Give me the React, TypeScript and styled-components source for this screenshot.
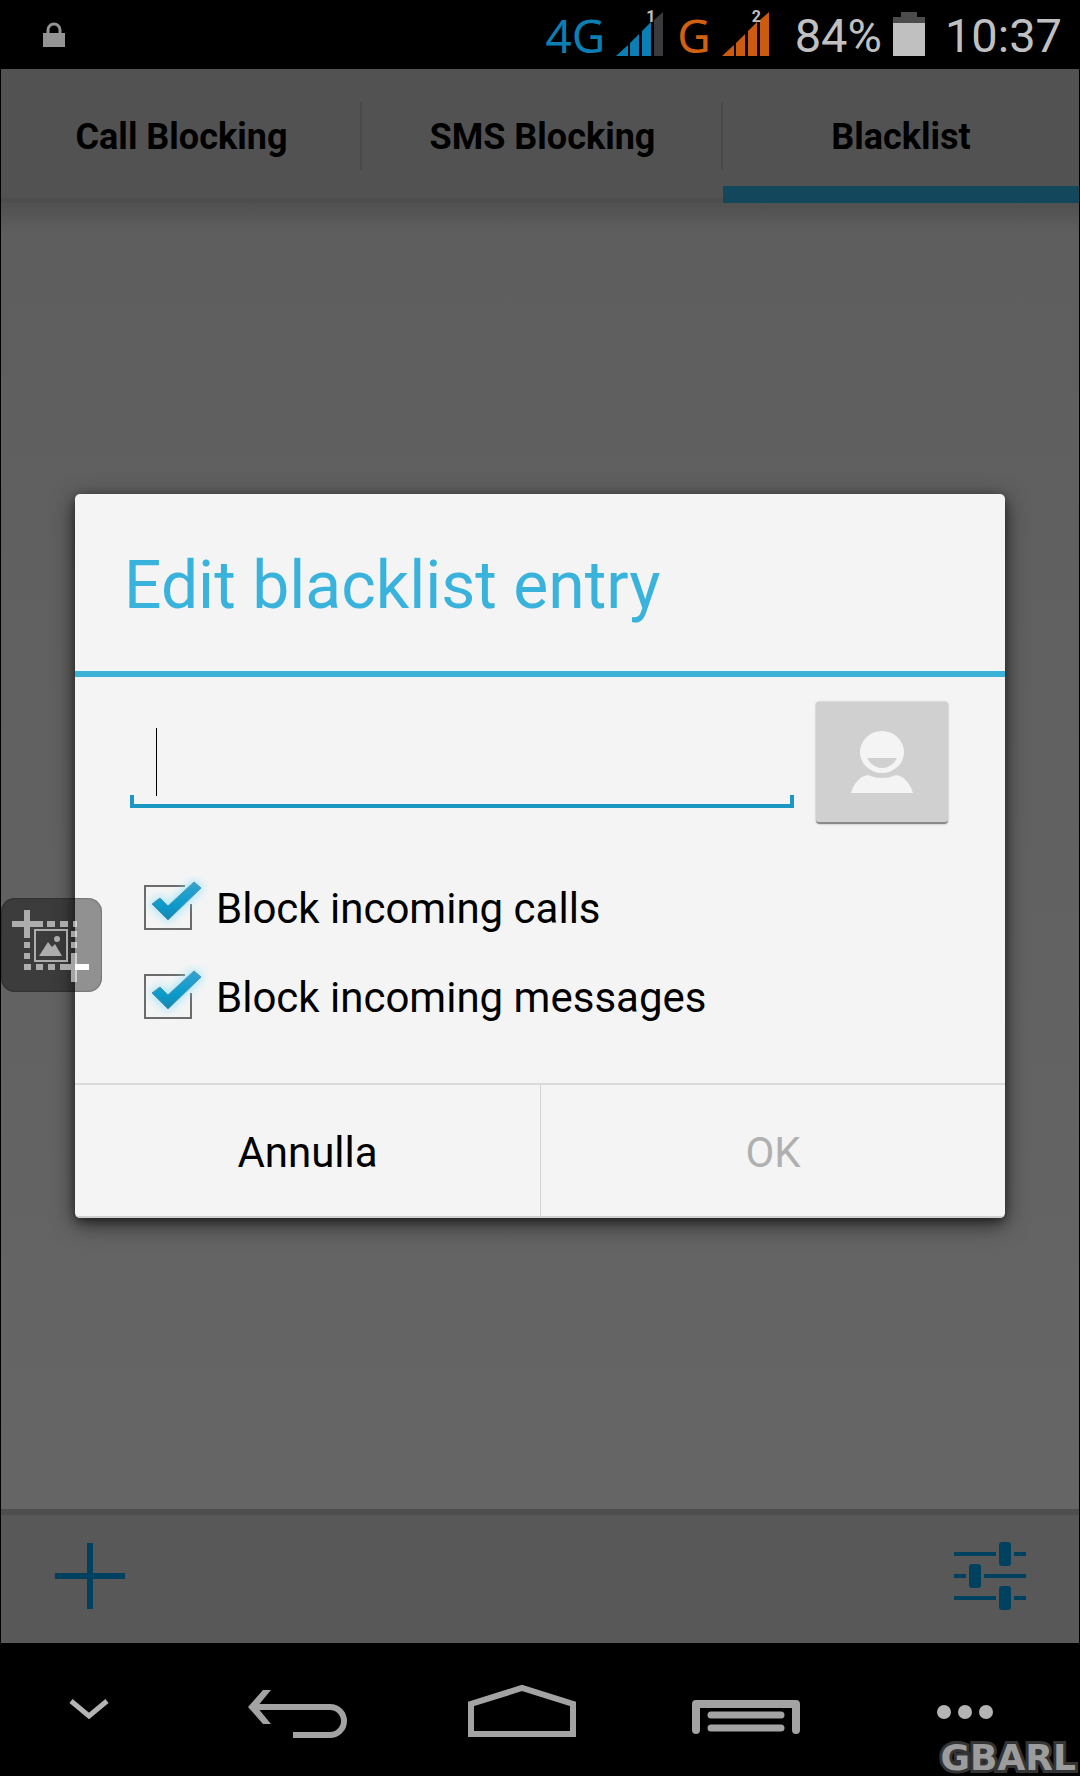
import React, { useState } from "react";
import styled, { createGlobalStyle } from "styled-components";

const GlobalStyle = createGlobalStyle`
  * { box-sizing: border-box; }
  body { margin: 0; background: #000; }
  button, input { font: inherit; color: inherit; margin: 0; padding: 0; border: 0; background: none; border-radius: 0; }
  button { cursor: pointer; }
  svg { display: block; flex: none; }
`;

const Screen = styled.div`
  display: flex;
  flex-direction: column;
  min-height: 100vh;
  background: #000;
  font-family: Roboto, "Liberation Sans", sans-serif;
  color: #000;
  position: relative;
`;

const StatusBar = styled.header`
  display: flex;
  align-items: center;
  justify-content: space-between;
  height: 69px;
  padding: 0 18px 0 43px;
  color: #c0c0c0;
`;

const StatusGroup = styled.div`
  display: flex;
  align-items: center;
  gap: 11px;
`;

const StatusText = styled.span`
  padding-top: 3px;
  font-size: 47px;
  line-height: 52px;
`;

const Clock = styled(StatusText)`
  margin-left: 9px;
`;

const Network = styled.span<{ $color: string }>`
  font-family: "Noto Sans", "Open Sans", sans-serif;
  font-size: 46px;
  line-height: 52px;
  color: ${(p) => p.$color};
`;

const Signal = styled.span<{ $last?: boolean }>`
  display: grid;
  margin-right: ${(p) => (p.$last ? "14px" : "2px")};
  & > * { grid-area: 1 / 1; }
`;

const SimNumber = styled.span`
  padding-left: 30px;
  font-size: 16px;
  font-weight: 700;
  line-height: 10px;
`;

const AppArea = styled.div`
  flex: 1;
  display: flex;
  flex-direction: column;
  margin: 0 1px;
  background: linear-gradient(#5d5d5d, #666);
`;

const Tabs = styled.nav`
  display: grid;
  grid-template-columns: 361fr 361fr 356fr;
  height: 134px;
  background: #525252;
`;

const Tab = styled.button<{ $active?: boolean }>`
  border-bottom: ${(p) => (p.$active ? "17px solid #13475c" : "5px solid #4d4d4d")};
  padding-top: ${(p) => (p.$active ? "19px" : "7px")};
  font-size: 36px;
  font-weight: 700;
  line-height: 40px;
  background: linear-gradient(#494949, #494949) right 0 top ${(p) => (p.$active ? "0 / 0 0" : "33px / 2px 68px")} no-repeat;
`;

const Content = styled.main`
  flex: 1;
  display: grid;
  align-items: center;
  padding: 0 74px;
  background: linear-gradient(rgba(77, 77, 77, 0.8), rgba(77, 77, 77, 0)) top / 100% 28px no-repeat;
`;

const Dialog = styled.form`
  display: flex;
  flex-direction: column;
  border-radius: 5px;
  background: #f4f4f4;
  box-shadow: 0 6px 22px rgba(0, 0, 0, 0.6), 0 3px 8px rgba(0, 0, 0, 0.4);
  overflow: hidden;
`;

const Title = styled.h1`
  margin: 0;
  padding: 52px 49px 0;
  height: 183px;
  border-bottom: 6px solid #3bb3d6;
  color: #3ab3dc;
  font-size: 66px;
  font-weight: 400;
  line-height: 80px;
`;

const Body = styled.div`
  display: flex;
  flex-direction: column;
  padding: 25px 57px 43px 55px;
`;

const EntryRow = styled.div`
  display: flex;
  align-items: flex-start;
  gap: 22px;
  margin-bottom: 38px;
`;

const Field = styled.div`
  position: relative;
  flex: 1;
  display: flex;
  height: 106px;
  border-bottom: 4px solid #1a97c2;
  background:
    linear-gradient(#1a97c2, #1a97c2) left bottom / 4px 9px no-repeat,
    linear-gradient(#1a97c2, #1a97c2) right bottom / 4px 9px no-repeat;
`;

const NumberInput = styled.input`
  flex: 1;
  min-width: 0;
  padding: 0 26px;
  font-size: 42px;
  outline: none;
`;

const Caret = styled.span`
  position: absolute;
  left: 26px;
  top: 26px;
  width: 1px;
  height: 68px;
  background: #000;
`;

const ContactButton = styled.button`
  display: grid;
  place-items: center;
  width: 132px;
  height: 122px;
  border-radius: 4px;
  border-bottom: 2px solid #8a8a8a;
  background: #d0d0d0;
  box-shadow: 0 0 2px #999;
`;

const Option = styled.label`
  display: flex;
  align-items: center;
  gap: 8px;
  height: 89px;
  padding-left: 10px;
  font-size: 42px;
  line-height: 48px;
`;

const OptionText = styled.span`
  padding-top: 4px;
`;

const CheckCell = styled.span`
  display: grid;
  & > * { grid-area: 1 / 1; }
  & > svg { pointer-events: none; }
`;

const CheckInput = styled.input`
  appearance: none;
  width: 68px;
  height: 62px;
`;

const Actions = styled.div`
  display: grid;
  grid-template-columns: 1fr 1fr;
  height: 135px;
  border-top: 2px solid #dadada;
  border-bottom: 2px solid #cfcfcf;
`;

const Action = styled.button`
  padding-top: 4px;
  font-size: 42px;
  line-height: 48px;
  &:disabled { color: #b0b0b0; border-left: 1px solid #d4d4d4; }
`;

const Toolbar = styled.footer`
  display: flex;
  align-items: center;
  justify-content: space-between;
  height: 134px;
  padding: 0 53px 6px;
  border-top: 6px solid #4e4e4e;
  background: #585858;
  color: #004160;
`;

const NavBar = styled.nav`
  display: grid;
  grid-template-columns: 186px 1fr 1fr 1fr 222px;
  height: 133px;
  color: #a3a3a3;
`;

const NavButton = styled.button<{ $edge?: boolean }>`
  display: grid;
  place-items: center;
  padding-right: ${(p) => (p.$edge ? "8px" : "0")};
`;

const CaptureButton = styled.button`
  position: absolute;
  left: 1px;
  top: 898px;
  width: 101px;
  height: 94px;
  border-radius: 14px;
  background: rgba(8, 8, 8, 0.42);
  box-shadow: inset 0 0 2px rgba(0, 0, 0, 0.6);
`;

const Watermark = styled.span`
  position: absolute;
  right: 4px;
  bottom: 0;
  font-family: "DejaVu Sans", sans-serif;
  font-size: 36px;
  font-weight: 700;
  line-height: 36px;
  color: #9c9c9c;
  -webkit-text-stroke: 6px #343434;
  paint-order: stroke fill;
`;

function SignalIcon({ color, last }: { color: string; last: string }) {
  return (
    <svg width="48" height="46" viewBox="0 0 48 46" fill={color}>
      <path d="M0 44 12 33V44ZM14 31 23 22V44H14ZM26 19 35 10V44H26Z" />
      <path d="M38 8 47 0V44H38Z" fill={last} />
    </svg>
  );
}

function CheckIcon({ id, checked }: { id: string; checked: boolean }) {
  return (
    <svg width="68" height="62" viewBox="0 0 68 62">
      <defs>
        <linearGradient id={id} x1="0" y1="0" x2="0" y2="1">
          <stop offset="0" stopColor="#35a3cf" />
          <stop offset="0.6" stopColor="#0a9bcb" />
          <stop offset="1" stopColor="#1687b3" />
        </linearGradient>
        <filter id={`${id}-glow`} x="-40%" y="-40%" width="180%" height="180%">
          <feGaussianBlur stdDeviation="4" />
        </filter>
      </defs>
      {checked ? (
        <>
          <path d="M45 10H5V53H51V28" fill="none" stroke="#6b6b6b" strokeWidth="2" />
          <path d="M12 28 20 22 28 30 54 6 61 12 28 44Z" fill="#8ee4ff" stroke="#8ee4ff" strokeWidth="4" opacity="0.8" filter={`url(#${id}-glow)`} />
          <path d="M12 28 20 22 28 30 54 6 61 12 28 44Z" fill={`url(#${id})`} stroke="#5591ab" strokeWidth="1" />
        </>
      ) : (
        <path d="M5 10H51V53H5Z" fill="none" stroke="#6b6b6b" strokeWidth="2" />
      )}
    </svg>
  );
}

function CheckOption({ id, children }: { id: string; children: React.ReactNode }) {
  const [checked, setChecked] = useState(true);
  return (
    <Option htmlFor={id}>
      <CheckCell>
        <CheckInput id={id} type="checkbox" checked={checked} onChange={(e) => setChecked(e.target.checked)} />
        <CheckIcon id={`${id}-fill`} checked={checked} />
      </CheckCell>
      <OptionText>{children}</OptionText>
    </Option>
  );
}

export default function App() {
  const [entry, setEntry] = useState("");
  return (
    <Screen>
      <GlobalStyle />
      <StatusBar>
        <svg width="22" height="26" viewBox="0 0 22 26">
          <path d="M5 12V8a6 6 0 0 1 12 0v4" fill="none" stroke="#949494" strokeWidth="3" />
          <path d="M0 11H22V25H0Z" fill="#949494" />
        </svg>
        <StatusGroup>
          <Network $color="#0b7fb4">4G</Network>
          <Signal>
            <SignalIcon color="#0b7fb4" last="#3a3a3d" />
            <SimNumber>1</SimNumber>
          </Signal>
          <Network $color="#d3610f">G</Network>
          <Signal $last>
            <SignalIcon color="#cc5a10" last="#cc5a10" />
            <SimNumber>2</SimNumber>
          </Signal>
          <StatusText>84%</StatusText>
          <svg width="32" height="45" viewBox="0 0 32 45">
            <path d="M8 0H24V5H32V12H0V5H8Z" fill="#4c4c4c" />
            <path d="M0 11H32V44H0Z" fill="#c0c0c0" />
          </svg>
          <Clock>10:37</Clock>
        </StatusGroup>
      </StatusBar>

      <AppArea>
        <Tabs>
          <Tab>Call Blocking</Tab>
          <Tab>SMS Blocking</Tab>
          <Tab $active>Blacklist</Tab>
        </Tabs>
        <Content>
          <Dialog onSubmit={(e) => e.preventDefault()}>
            <Title>Edit blacklist entry</Title>
            <Body>
              <EntryRow>
                <Field>
                  <NumberInput aria-label="Number" value={entry} onChange={(e) => setEntry(e.target.value)} />
                  {entry === "" && <Caret />}
                </Field>
                <ContactButton type="button" aria-label="Choose contact">
                  <svg width="64" height="64" viewBox="0 0 64 64" fill="#f4f4f4">
                    <path
                      fillRule="evenodd"
                      d="M32 1a22 21 0 1 1 0 42a22 21 0 1 1 0-42ZM17 28c4 7 9 10 15 10s11-3 15-10Z"
                    />
                    <path d="M1 63C4 53 10 46 18 45c8 4 20 4 28 0 8 1 14 8 17 18Z" />
                  </svg>
                </ContactButton>
              </EntryRow>
              <CheckOption id="calls">Block incoming calls</CheckOption>
              <CheckOption id="messages">Block incoming messages</CheckOption>
            </Body>
            <Actions>
              <Action type="button">Annulla</Action>
              <Action type="submit" disabled>OK</Action>
            </Actions>
          </Dialog>
        </Content>
        <Toolbar>
          <button aria-label="Add">
            <svg width="72" height="66" viewBox="0 0 72 66" fill="currentColor">
              <path d="M33 0H39V30H71V36H39V66H33V36H1V30H33Z" />
            </svg>
          </button>
          <button aria-label="Settings">
            <svg width="72" height="70" viewBox="0 0 72 70" fill="currentColor">
              <path d="M0 11H42V15H0ZM60 11H72V15H60ZM0 33H12V37H0ZM30 33H72V37H30ZM0 55H42V59H0ZM60 55H72V59H60Z" />
              <rect x="45" y="1" width="12" height="24" rx="3" />
              <rect x="15" y="23" width="12" height="24" rx="3" />
              <rect x="45" y="45" width="12" height="24" rx="3" />
            </svg>
          </button>
        </Toolbar>
      </AppArea>

      <NavBar>
        <NavButton $edge aria-label="Hide">
          <svg width="40" height="22" viewBox="0 0 40 22">
            <path d="M2 2 20 17 38 2" fill="none" stroke="#b4b4b4" strokeWidth="5" />
          </svg>
        </NavButton>
        <NavButton aria-label="Back">
          <svg width="100" height="58" viewBox="0 -8 100 58">
            <path d="M6 18H82a14 14 0 0 1 0 28H45" fill="none" stroke="currentColor" strokeWidth="6" />
            <path d="M15 1H23L9 18 23 35H15L0 18Z" fill="currentColor" />
          </svg>
        </NavButton>
        <NavButton aria-label="Home">
          <svg width="110" height="56" viewBox="0 -2 110 56">
            <path d="M4 50V20L55 4 106 20V50Z" fill="none" stroke="currentColor" strokeWidth="6" />
          </svg>
        </NavButton>
        <NavButton aria-label="Menu">
          <svg width="110" height="52" viewBox="0 -14 110 52" fill="none" stroke="currentColor" strokeLinecap="round" strokeLinejoin="round">
            <path d="M5 32V6H105V32" strokeWidth="8" />
            <path d="M20 17H90M20 30H90" strokeWidth="7" />
          </svg>
        </NavButton>
        <NavButton $edge aria-label="More">
          <svg width="58" height="18" viewBox="0 -4 58 18" fill="#b4b4b4">
            <circle cx="8" cy="7" r="7" />
            <circle cx="29" cy="7" r="7" />
            <circle cx="50" cy="7" r="7" />
          </svg>
        </NavButton>
      </NavBar>

      <CaptureButton aria-label="Capture screen">
        <svg width="101" height="94" viewBox="0 0 101 94" fill="none" stroke="rgba(255,255,255,0.58)">
          <path d="M11 26H42M26 12V40" strokeWidth="6" />
          <path d="M46 26H76" strokeWidth="6" strokeDasharray="8 5" />
          <path d="M26 44V66M73 33V54" strokeWidth="6" strokeDasharray="6 5" />
          <path d="M23 69H58" strokeWidth="6" strokeDasharray="7 5" />
          <path d="M59 69H74M73 55V84" strokeWidth="6" />
          <path d="M74 69H88" stroke="#fff" strokeWidth="6" />
          <path d="M34 32H66V63H34Z" strokeWidth="2" />
          <path d="M38 58 47 44 51 49 54 46 61 58Z" fill="rgba(255,255,255,0.58)" stroke="none" />
          <circle cx="56" cy="41" r="3" fill="rgba(255,255,255,0.58)" stroke="none" />
        </svg>
      </CaptureButton>
      <Watermark>GBARL</Watermark>
    </Screen>
  );
}
